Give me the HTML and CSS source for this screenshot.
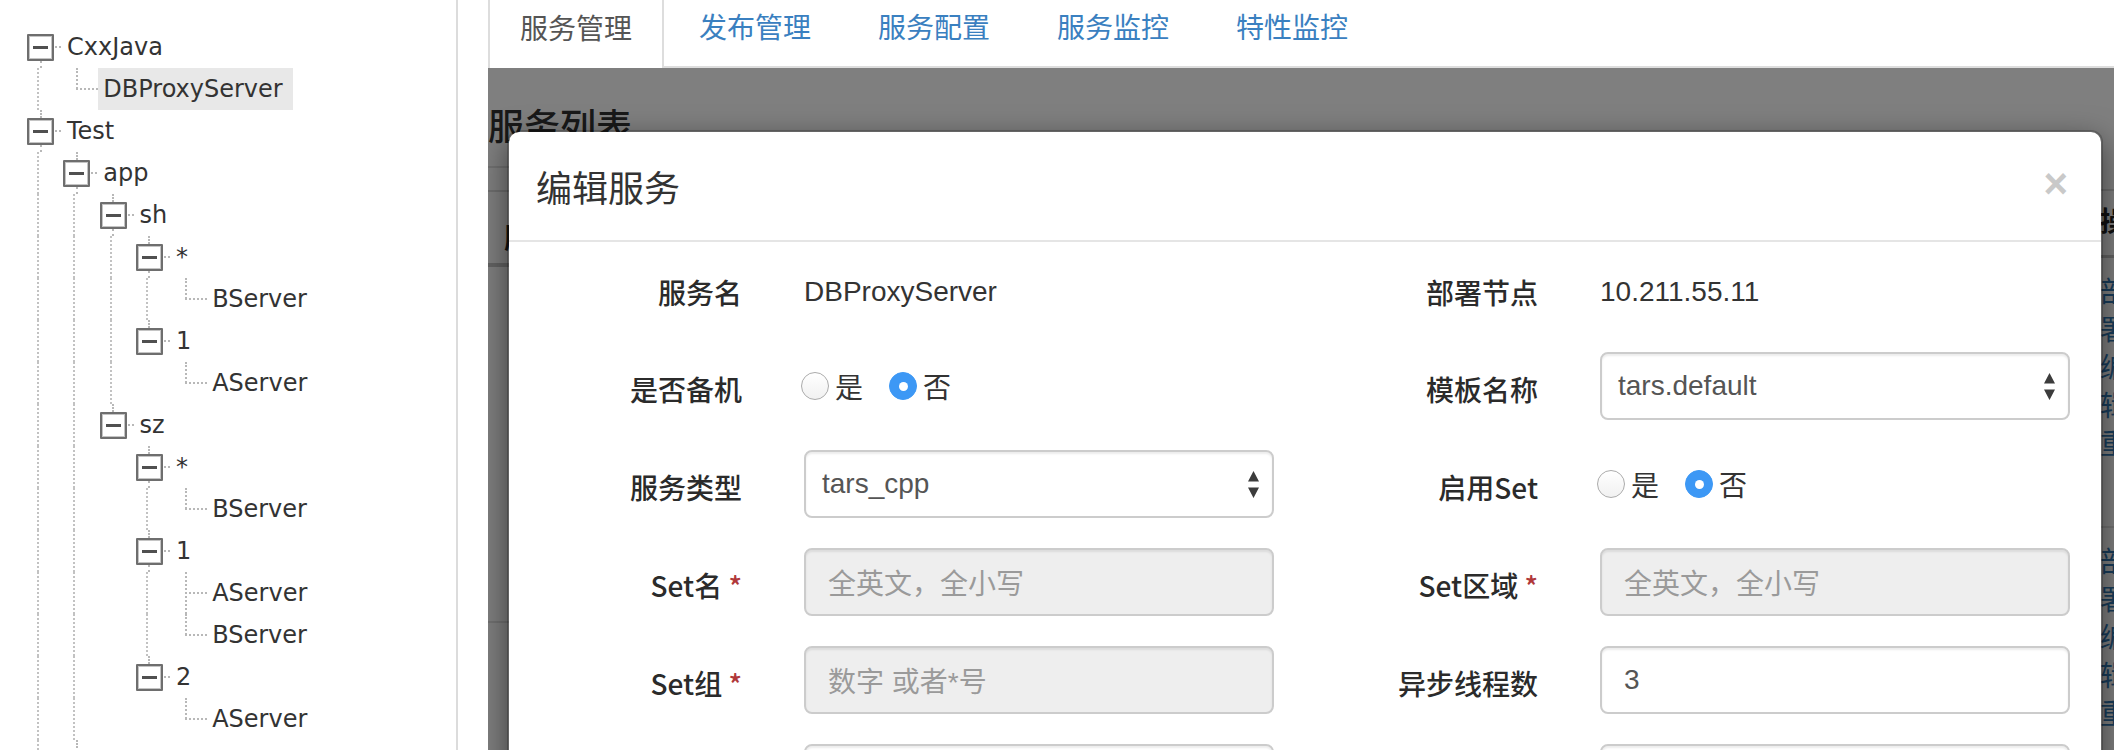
FILE: index.html
```html
<!DOCTYPE html>
<html lang="zh-CN">
<head>
<meta charset="utf-8">
<title>服务管理</title>
<link rel="stylesheet" href="styles.css">
</head>
<body>
<div class="app">
  <aside class="tree">
    <div class="node"><span class="sw fold b"><i class="box"></i></span><span class="name">CxxJava</span></div>
    <div class="node"><span class="g l"></span><span class="sw leaf end"></span><span class="name sel">DBProxyServer</span></div>
    <div class="node"><span class="sw fold t b"><i class="box"></i></span><span class="name">Test</span></div>
    <div class="node"><span class="g l"></span><span class="sw fold t b"><i class="box"></i></span><span class="name">app</span></div>
    <div class="node"><span class="g l"></span><span class="g l"></span><span class="sw fold t b"><i class="box"></i></span><span class="name">sh</span></div>
    <div class="node"><span class="g l"></span><span class="g l"></span><span class="g l"></span><span class="sw fold t b"><i class="box"></i></span><span class="name">*</span></div>
    <div class="node"><span class="g l"></span><span class="g l"></span><span class="g l"></span><span class="g l"></span><span class="sw leaf end"></span><span class="name">BServer</span></div>
    <div class="node"><span class="g l"></span><span class="g l"></span><span class="g l"></span><span class="sw fold t"><i class="box"></i></span><span class="name">1</span></div>
    <div class="node"><span class="g l"></span><span class="g l"></span><span class="g l"></span><span class="g"></span><span class="sw leaf end"></span><span class="name">AServer</span></div>
    <div class="node"><span class="g l"></span><span class="g l"></span><span class="sw fold t"><i class="box"></i></span><span class="name">sz</span></div>
    <div class="node"><span class="g l"></span><span class="g l"></span><span class="g"></span><span class="sw fold t b"><i class="box"></i></span><span class="name">*</span></div>
    <div class="node"><span class="g l"></span><span class="g l"></span><span class="g"></span><span class="g l"></span><span class="sw leaf end"></span><span class="name">BServer</span></div>
    <div class="node"><span class="g l"></span><span class="g l"></span><span class="g"></span><span class="sw fold t b"><i class="box"></i></span><span class="name">1</span></div>
    <div class="node"><span class="g l"></span><span class="g l"></span><span class="g"></span><span class="g l"></span><span class="sw leaf mid"></span><span class="name">AServer</span></div>
    <div class="node"><span class="g l"></span><span class="g l"></span><span class="g"></span><span class="g l"></span><span class="sw leaf end"></span><span class="name">BServer</span></div>
    <div class="node"><span class="g l"></span><span class="g l"></span><span class="g"></span><span class="sw fold t"><i class="box"></i></span><span class="name">2</span></div>
    <div class="node"><span class="g l"></span><span class="g l"></span><span class="g"></span><span class="g"></span><span class="sw leaf end"></span><span class="name">AServer</span></div>
    <div class="node"><span class="g l"></span><span class="sw fold t"></span></div>
  </aside>

  <main class="main">
    <nav class="tabs">
      <a class="tab active">服务管理</a>
      <a class="tab">发布管理</a>
      <a class="tab">服务配置</a>
      <a class="tab">服务监控</a>
      <a class="tab">特性监控</a>
    </nav>

    <section class="pane">
      <h4 class="pane-title">服务列表</h4>
      <div class="list">
        <div class="list-main">
          <div class="list-head"><span class="th">服务</span></div>
          <div class="list-row"></div>
        </div>
        <div class="list-ops">
          <div class="ops-head">操</div>
          <div class="ops-row">部<br>署<br>编<br>辑<br>重</div>
          <div class="ops-row">部<br>署<br>编<br>辑<br>重</div>
        </div>
      </div>

      <div class="backdrop"></div>

      <div class="modal">
        <div class="modal-header">
          <h4 class="modal-title">编辑服务</h4>
          <span class="close">×</span>
        </div>
        <div class="modal-body">
          <div class="field first"><label>服务名</label><div class="static">DBProxyServer</div></div>
          <div class="field first"><label>部署节点</label><div class="static">10.211.55.11</div></div>

          <div class="field"><label>是否备机</label>
            <div class="radios"><span class="radio"><i class="dot"></i>是</span><span class="radio"><i class="dot on"></i>否</span></div>
          </div>
          <div class="field"><label>模板名称</label>
            <div class="select">tars.default<svg class="arrows" width="11" height="27" viewBox="0 0 11 27"><path d="M5.5 0L11 10.5H0Z M0 16.5H11L5.5 27Z" fill="#3c3c3c"/></svg></div>
          </div>

          <div class="field"><label>服务类型</label>
            <div class="select">tars_cpp<svg class="arrows" width="11" height="27" viewBox="0 0 11 27"><path d="M5.5 0L11 10.5H0Z M0 16.5H11L5.5 27Z" fill="#3c3c3c"/></svg></div>
          </div>
          <div class="field"><label>启用Set</label>
            <div class="radios"><span class="radio"><i class="dot"></i>是</span><span class="radio"><i class="dot on"></i>否</span></div>
          </div>

          <div class="field"><label>Set名 <em class="req">*</em></label><div class="input disabled">全英文，全小写</div></div>
          <div class="field"><label>Set区域 <em class="req">*</em></label><div class="input disabled">全英文，全小写</div></div>

          <div class="field"><label>Set组 <em class="req">*</em></label><div class="input disabled">数字 或者*号</div></div>
          <div class="field"><label>异步线程数</label><div class="input">3</div></div>

          <div class="field"><label>默认路径</label><div class="input"></div></div>
          <div class="field"><label>EXE路径</label><div class="input"></div></div>
        </div>
      </div>
    </section>
  </main>
</div>
</body>
</html>
```
FILE: styles.css
```css
html, body {
  margin: 0;
  padding: 0;
  height: 750px;
  overflow: hidden;
  background: #fff;
  font-family: "Liberation Sans", "Noto Sans CJK SC", sans-serif;
  color: #333;
}

.app {
  display: flex;
  height: 750px;
}

/* ---------- tree ---------- */
.tree {
  width: 456px;
  flex: none;
  border-right: 2px solid #dcdcdc;
  padding-top: 26px;
  margin-right: 30px;
  box-sizing: content-box;
  font-family: "DejaVu Sans", "Noto Sans CJK SC", sans-serif;
  overflow: hidden;
}

.node {
  display: flex;
  align-items: center;
  height: 42px;
  padding-left: 27px;
}

.g {
  flex: none;
  width: 36.3px;
  height: 42px;
  position: relative;
}

.g.l::before {
  content: "";
  position: absolute;
  left: 10px;
  top: 0;
  bottom: 0;
  border-left: 2px dotted #c2c2c2;
}

.sw {
  flex: none;
  width: 35px;
  height: 42px;
  position: relative;
}

.sw.t::before {
  content: "";
  position: absolute;
  left: 12.5px;
  top: 0;
  height: 7.5px;
  border-left: 2px dotted #b8b8b8;
}

.sw.b::after {
  content: "";
  position: absolute;
  left: 12.5px;
  top: 34.5px;
  bottom: 0;
  border-left: 2px dotted #b8b8b8;
}

.box {
  position: absolute;
  left: 0;
  top: 7.5px;
  width: 27px;
  height: 27px;
  box-sizing: border-box;
  border: 2px solid #6e6e6e;
  box-shadow: inset 0 0 0 1px #c4c4c4;
  border-radius: 1px;
  background: #fff;
}

.box::after {
  content: "";
  position: absolute;
  left: 4px;
  right: 4px;
  top: 10px;
  height: 3px;
  background: #505050;
}

.box::before {
  content: "";
  position: absolute;
  left: 26px;
  top: 10.5px;
  width: 6px;
  border-top: 2px dotted #b8b8b8;
}

.sw.leaf::before {
  content: "";
  position: absolute;
  left: 12.5px;
  top: 0;
  height: 21px;
  border-left: 2px dotted #b8b8b8;
}

.sw.leaf.mid::before {
  height: 42px;
}

.sw.leaf::after {
  content: "";
  position: absolute;
  left: 12.5px;
  top: 20px;
  width: 22px;
  border-top: 2px dotted #b8b8b8;
}

.name {
  height: 42px;
  line-height: 42px;
  padding: 0 10px 0 5px;
  font-size: 24px;
  color: #333;
  white-space: nowrap;
}

.name.sel {
  background: #e8e8e8;
}

/* ---------- main ---------- */
.main {
  flex: 1;
  display: flex;
  flex-direction: column;
  min-width: 0;
}

.tabs {
  display: flex;
  height: 68px;
  flex: none;
  box-sizing: border-box;
  border-bottom: 2px solid #dddddd;
}

.tab {
  display: flex;
  align-items: center;
  padding: 0 30px 15px;
  margin-right: 3px;
  border: 2px solid transparent;
  border-top: 0;
  border-bottom: 0;
  font-size: 28px;
  color: #3a80c0;
  text-decoration: none;
}

.tab.active {
  color: #555;
  background: #fff;
  border-color: #dddddd;
  margin-bottom: -2px;
}

.pane {
  flex: 1;
  position: relative;
  overflow: hidden;
}

.pane-title {
  margin: 40px 0 0;
  font-size: 36px;
  font-weight: 500;
  line-height: 40px;
  color: #333;
}

/* list behind the backdrop */
.list {
  display: flex;
  margin-top: 18px;
}

.list-main {
  flex: 1;
  border-top: 2px solid #e2e2e2;
}

.list-head {
  margin-top: 22px;
  height: 71px;
  border-top: 2px solid #dddddd;
  border-bottom: 4px solid #c6c6c6;
  display: flex;
  align-items: center;
}

.th {
  font-size: 28px;
  font-weight: 700;
  color: #222;
  padding: 18px 0 0 16px;
}

.list-row {
  height: 354px;
  border-bottom: 2px solid #e2e2e2;
}

.list-ops {
  width: 14px;
  flex: none;
  padding-top: 23px;
  font-size: 28px;
  white-space: nowrap;
}

.ops-head {
  height: 64px;
  border-top: 2px solid #dddddd;
  border-bottom: 3px solid #c6c6c6;
  line-height: 64px;
  font-weight: 700;
  color: #222;
}

.ops-row {
  height: 252px;
  padding-top: 16px;
  border-bottom: 2px solid #e2e2e2;
  line-height: 38px;
  color: #337ab7;
}

.backdrop {
  position: absolute;
  inset: 0;
  background: rgba(0, 0, 0, 0.5);
}

/* ---------- modal ---------- */
.modal {
  position: absolute;
  left: 19px;
  top: 62px;
  width: 1596px;
  height: 760px;
  box-sizing: border-box;
  border: 2px solid rgba(0, 0, 0, 0.2);
  border-radius: 12px;
  background: #fff;
  background-clip: padding-box;
  box-shadow: 0 10px 30px rgba(0, 0, 0, 0.5);
}

.modal-header {
  height: 110px;
  box-sizing: border-box;
  display: flex;
  align-items: center;
  justify-content: space-between;
  padding: 0 33px 0 27px;
  border-bottom: 2px solid #e5e5e5;
}

.modal-title {
  margin: 0;
  font-size: 36px;
  font-weight: 400;
  color: #333;
}

.close {
  font-family: "Liberation Sans", sans-serif;
  font-size: 42px;
  font-weight: 700;
  color: #c9c9c9;
  line-height: 1;
  margin-top: -4px;
}

.modal-body {
  display: grid;
  grid-template-columns: 796px 796px;
  row-gap: 30px;
  padding-top: 12px;
}

.field {
  display: grid;
  grid-template-columns: 233px 470px;
  column-gap: 62px;
  height: 68px;
  align-items: center;
}

.field label {
  text-align: right;
  font-family: "Noto Sans CJK SC", sans-serif;
  font-size: 28px;
  font-weight: 500;
  color: #2b2b2b;
  padding-top: 6px;
  white-space: nowrap;
}

.field.first label,
.field.first .static {
  padding-top: 8px;
}

.req {
  font-style: normal;
  color: #b0383a;
}

.static {
  font-size: 28px;
  color: #333;
}

.radios {
  display: flex;
  align-items: center;
  gap: 26px;
  margin-left: -3px;
  font-size: 28px;
  color: #333;
}

.radio {
  display: flex;
  align-items: center;
  gap: 6px;
}

.dot {
  width: 28px;
  height: 28px;
  box-sizing: border-box;
  border-radius: 50%;
  border: 1.5px solid #ababab;
  background: linear-gradient(#ffffff, #f1f1f1);
  position: relative;
}

.dot.on {
  border-color: #3d98f5;
  background: #3d98f5;
}

.dot.on::after {
  content: "";
  position: absolute;
  left: 50%;
  top: 50%;
  width: 9px;
  height: 9px;
  margin: -4.5px 0 0 -4.5px;
  border-radius: 50%;
  background: #fff;
}

.select,
.input {
  height: 68px;
  box-sizing: border-box;
  border: 2px solid #cccccc;
  border-radius: 8px;
  display: flex;
  align-items: center;
  font-size: 28px;
  color: #555;
  box-shadow: inset 0 2px 2px rgba(0, 0, 0, 0.075);
}

.select {
  position: relative;
  padding-left: 16px;
  background: #fff;
}

.arrows {
  position: absolute;
  right: 13px;
  top: 50%;
  margin-top: -13.5px;
}

.input {
  padding: 0 22px;
  background: #fff;
}

.input.disabled {
  background: #eeeeee;
  color: #9a9a9a;
}
```
